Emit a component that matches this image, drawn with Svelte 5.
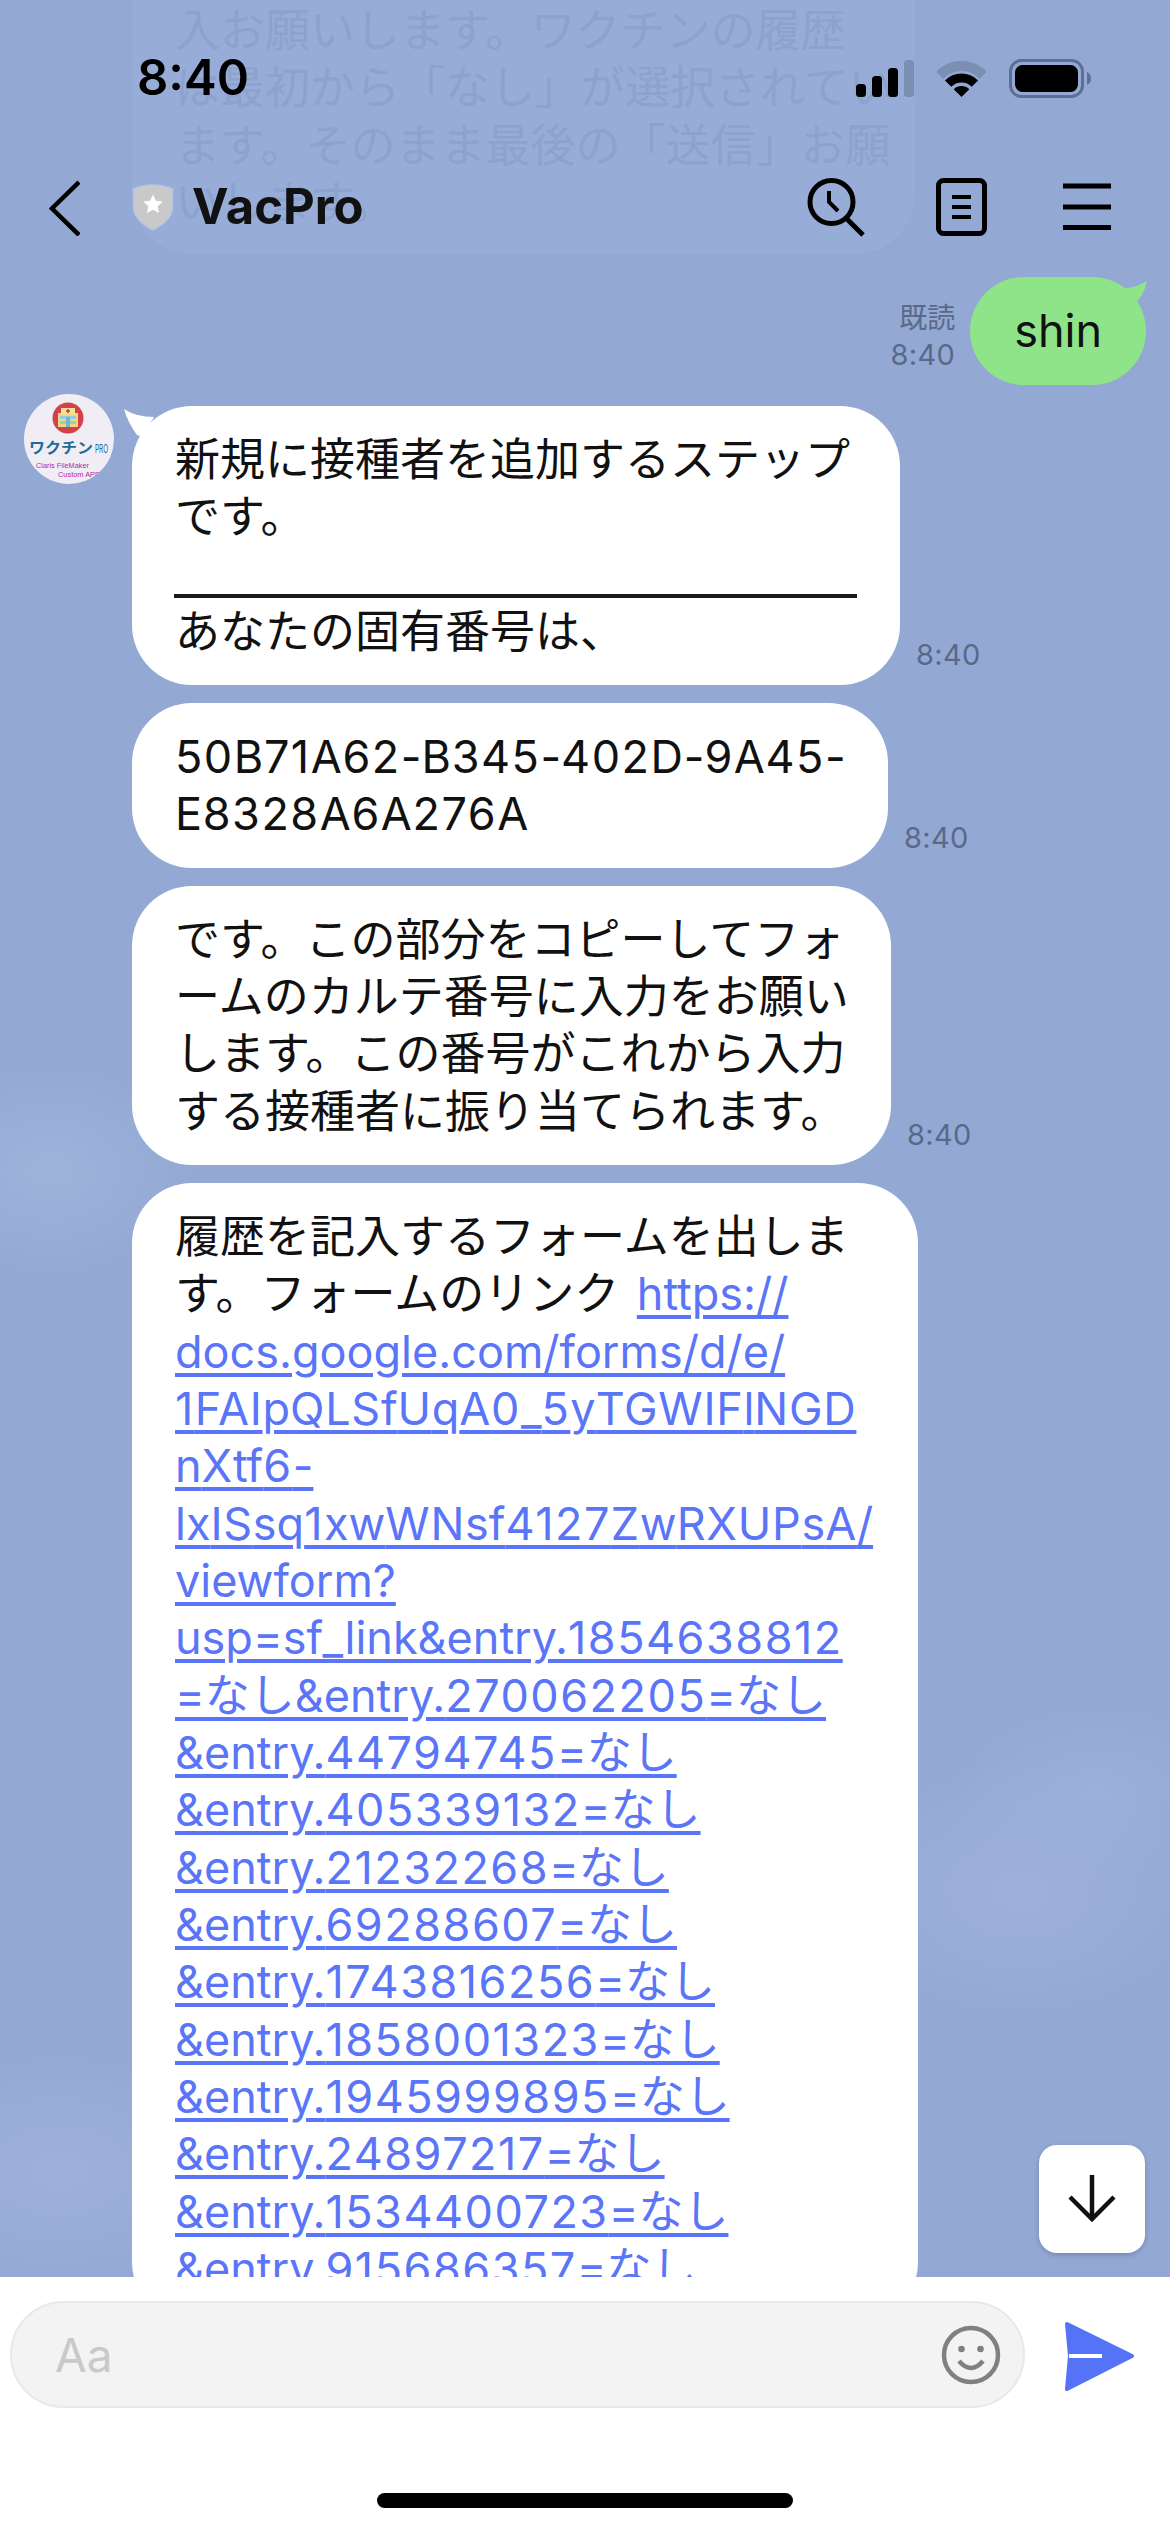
<script>
  const links = [
    'docs.google.com/forms/d/e/',
    '1FAIpQLSfUqA0_5yTGWIFlNGD',
    'nXtf6-',
    'lxISsq1xwWNsf4127ZwRXUPsA/',
    'viewform?',
    'usp=sf_link&entry.1854638812',
    '=なし&entry.270062205=なし',
    '&entry.44794745=なし',
    '&entry.405339132=なし',
    '&entry.21232268=なし',
    '&entry.69288607=なし',
    '&entry.1743816256=なし',
    '&entry.1858001323=なし',
    '&entry.1945999895=なし',
    '&entry.24897217=なし',
    '&entry.1534400723=なし',
    '&entry.915686357=なし'
  ];

  // The original face sets digits and capitals wider than Inter does.
  const parts = (line) =>
    line.split(/(\d+|[A-Z]+)/).filter(Boolean).map((text) => ({
      text,
      kind: /\d/.test(text) ? 'num' : /[A-Z]/.test(text) ? 'cap' : ''
    }));
</script>

{#snippet latin(line)}{#each parts(line) as p}<span class={p.kind}>{p.text}</span>{/each}{/snippet}

<div class="screen">
  <main class="chat">
    <div class="ghost">入お願いします。ワクチンの履歴<br />は最初から「なし」が選択されてい<br />ます。そのまま最後の「送信」お願<br />いします。</div>

    <div class="sent-row">
      <div class="meta">
        <span class="read">既読</span>
        <span class="time">8:40</span>
      </div>
      <div class="bubble sent">
        shin
        <svg class="tail-right" viewBox="0 0 40 40" aria-hidden="true"><path d="M0 12 Q18 13 33 4 Q30 20 17 30 Z" /></svg>
      </div>
    </div>

    <div class="group">
      <svg class="avatar" viewBox="0 0 90 90" aria-hidden="true">
        <rect width="90" height="90" fill="#f0edf4" />
        <circle cx="44" cy="24" r="15.5" fill="#d2414a" />
        <rect x="34" y="19" width="20" height="14" fill="#f6d77a" />
        <rect x="37" y="14" width="14" height="6" fill="#f8e29a" />
        <path d="M44 15v4M42 17h4" stroke="#c8323c" stroke-width="1.4" />
        <rect x="36" y="22" width="16" height="3" fill="#8fd0dc" />
        <rect x="36" y="27" width="16" height="3" fill="#8fd0dc" />
        <rect x="42" y="23" width="4" height="10" fill="#6fb9cf" />
        <text x="5" y="59" class="av-jp" textLength="64" lengthAdjust="spacingAndGlyphs">ワクチン</text>
        <text x="71" y="59" class="av-pro" textLength="13" lengthAdjust="spacingAndGlyphs">PRO</text>
        <text x="12" y="74" class="av-small" textLength="53" lengthAdjust="spacingAndGlyphs">Claris FileMaker</text>
        <text x="34" y="83" class="av-small" textLength="42" lengthAdjust="spacingAndGlyphs">Custom APP</text>
      </svg>

      <div class="stack">
        <div class="msg">
          <div class="bubble in w1">
            <svg class="tail-left" viewBox="0 0 30 30" aria-hidden="true"><path d="M0 0 Q12 8 30 8 L18 28 L13 26 Q4 14 0 0 Z" /></svg>
            新規に接種者を追加するステップ<br />です。
            <div class="rule"></div>
            あなたの固有番号は、
          </div>
          <span class="time">8:40</span>
        </div>

        <div class="msg">
          <div class="bubble in w2">{@render latin('50B71A62-B345-402D-9A45-')}<br />{@render latin('E8328A6A276A')}</div>
          <span class="time">8:40</span>
        </div>

        <div class="msg">
          <div class="bubble in w3">です。この部分をコピーしてフォ<br />ームのカルテ番号に入力をお願い<br />します。この番号がこれから入力<br />する接種者に振り当てられます。</div>
          <span class="time">8:40</span>
        </div>

        <div class="msg">
          <div class="bubble in w4">
            履歴を記入するフォームを出しま<br />す。フォームのリンク <span class="link first">https://</span><br />
            {#each links as line}
              <span class="link">{@render latin(line)}</span><br />
            {/each}
          </div>
        </div>
      </div>
    </div>

    <button class="down" aria-label="scroll to latest">
      <svg viewBox="0 0 60 60" aria-hidden="true">
        <path d="M30 6V50" />
        <path d="M8 28L30 50L52 28" />
      </svg>
    </button>
  </main>

  <header class="top">
    <div class="status">
      <span class="clock">8:40</span>
      <div class="status-icons">
        <svg class="sig" viewBox="856 58 58 39" aria-hidden="true">
          <rect x="856" y="83" width="10" height="13" rx="3.5" fill="#000" />
          <rect x="872" y="75" width="10" height="21" rx="3.5" fill="#000" />
          <rect x="888" y="67" width="10" height="29" rx="3.5" fill="#000" />
          <rect x="904" y="59" width="10" height="37" rx="3.5" fill="#7b8fb2" />
        </svg>
        <svg class="wifi" viewBox="937 58 49 39" aria-hidden="true">
          <path d="M939.6 74.1A31 31 0 0 1 983.4 74.1" fill="none" stroke="#7b8fb2" stroke-width="10" />
          <path d="M948.1 82.6A19 19 0 0 1 974.9 82.6" fill="none" stroke="#000" stroke-width="9" />
          <path d="M961.5 96L953.7 88.2A11 11 0 0 1 969.3 88.2Z" fill="#000" />
        </svg>
        <svg class="batt" viewBox="1009 58 82 39" aria-hidden="true">
          <rect x="1010.5" y="59.5" width="72" height="36" rx="11" fill="none" stroke="#5d7093" stroke-width="3" />
          <rect x="1015" y="64" width="63" height="27" rx="7.5" fill="#000" />
          <path d="M1087 71Q1091 73 1091 77.5Q1091 82 1087 84Z" fill="#5d7093" />
        </svg>
      </div>
    </div>
    <nav class="nav">
      <svg class="back" viewBox="49 178 31 58" aria-hidden="true"><path d="M79 182L52 208.500L79 235" /></svg>
      <svg class="shield" viewBox="132 183 42 48" aria-hidden="true">
        <path d="M133.500 189Q153 181 172.500 189V208Q172 220 153 230Q134 220 133.500 208Z" fill="#c9c9c9" stroke="#b4c6e4" stroke-width="1.500" />
        <path d="M153 194.500l2.900 6.300 6.900.8-5.100 4.700 1.400 6.800-6.100-3.400-6.100 3.400 1.400-6.800-5.100-4.700 6.900-.8z" fill="#fff" />
      </svg>
      <span class="title">VacPro</span>
      <svg class="search" viewBox="806 176 60 60" aria-hidden="true">
        <circle cx="831.500" cy="201" r="21.500" />
        <path d="M846 217L863 234" />
        <path class="hand" d="M829 190V201L838 210" />
      </svg>
      <svg class="doc" viewBox="936 179 51 58" aria-hidden="true">
        <rect x="938.500" y="181.500" width="46" height="53" rx="5" />
        <path class="hand" d="M952 198H971M952 208H971M952 218H971" />
      </svg>
      <svg class="menu" viewBox="1063 184 48 48" aria-hidden="true">
        <path d="M1063 187H1111M1063 208H1111M1063 228.500H1111" />
      </svg>
    </nav>
  </header>

  <footer class="composer">
    <div class="field">
      <span class="ph">Aa</span>
      <svg class="smile" viewBox="0 0 60 60" aria-hidden="true">
        <circle cx="30" cy="30" r="27" />
        <circle class="dot" cx="20.500" cy="24" r="3.300" />
        <circle class="dot" cx="39.500" cy="24" r="3.300" />
        <path d="M18 36Q30 50 42 36" />
      </svg>
    </div>
    <svg class="send" viewBox="1062 2319 75 75" aria-hidden="true">
      <path d="M1067 2324L1132 2356L1067 2389L1070 2356Z" fill="#5573f7" stroke="#5573f7" stroke-width="4" stroke-linejoin="round" />
      <rect x="1069" y="2354" width="33" height="4" fill="#fff" />
    </svg>
    <div class="home"></div>
  </footer>
</div>

<style>
  :global(body) {
    margin: 0;
    background: #fff;
  }

  .screen {
    position: relative;
    width: 1170px;
    height: 2532px;
    display: flex;
    flex-direction: column;
    overflow: hidden;
    font-family: Inter, "Noto Sans CJK JP", sans-serif;
    color: #111;
  }

  .chat {
    position: relative;
    flex: 1;
    min-height: 0;
    overflow: hidden;
    background-color: #93a9d4;
    background-image:
      radial-gradient(ellipse 190px 130px at 1020px 1890px, rgba(168, 184, 224, 0.5), transparent 100%),
      radial-gradient(ellipse 150px 90px at 1100px 1790px, rgba(168, 190, 224, 0.35), transparent 100%),
      radial-gradient(ellipse 150px 110px at 50px 1170px, rgba(168, 190, 224, 0.5), transparent 100%),
      radial-gradient(ellipse 190px 120px at 60px 2170px, rgba(168, 184, 224, 0.5), transparent 100%);
  }

  .ghost {
    width: 783px;
    height: 254px;
    margin-left: 132px;
    padding: 2px 0 0 43px;
    box-sizing: border-box;
    border-radius: 0 0 60px 60px;
    background: #97add8;
    color: #8ca3ce;
    font-size: 45px;
    line-height: 57.330px;
    white-space: nowrap;
    overflow: hidden;
  }

  .sent-row {
    display: flex;
    justify-content: flex-end;
    align-items: flex-end;
    gap: 15px;
    margin-top: 23px;
    padding-right: 24px;
  }

  .meta {
    display: flex;
    flex-direction: column;
    align-items: flex-end;
    padding-bottom: 12px;
    color: #5a6988;
  }

  .read {
    font-size: 28px;
    line-height: 37px;
  }

  .time {
    font-size: 29px;
    line-height: 36px;
    color: #5a6988;
    letter-spacing: 0.3px;
  }

  .bubble {
    position: relative;
    box-sizing: border-box;
    font-size: 45px;
    line-height: 57.330px;
    white-space: nowrap;
    border-radius: 60px;
  }

  .num {
    letter-spacing: 1.500px;
  }

  .cap {
    letter-spacing: 0.700px;
  }

  .sent {
    height: 108px;
    padding: 25px 44px;
    background: #8fe388;
    border-radius: 54px;
  }

  .tail-right {
    position: absolute;
    top: 0;
    right: -8px;
    width: 40px;
    height: 40px;
    fill: #8fe388;
  }

  .group {
    display: flex;
    align-items: flex-start;
    gap: 18px;
    margin-top: 21px;
    padding-left: 24px;
  }

  .avatar {
    flex: none;
    width: 90px;
    height: 90px;
    margin-top: -12px;
    border-radius: 50%;
  }

  .av-jp {
    font-size: 15px;
    font-weight: 700;
    fill: #1f6a9a;
  }

  .av-pro {
    font-size: 12px;
    fill: #1f6a9a;
  }

  .av-small {
    font-family: "Liberation Sans", sans-serif;
    font-size: 7px;
    fill: #b825a8;
  }

  .stack {
    display: flex;
    flex-direction: column;
    gap: 18px;
  }

  .msg {
    display: flex;
    align-items: flex-end;
    gap: 16px;
  }

  .msg .time {
    padding-bottom: 12px;
  }

  .in {
    padding: 25px 0 25px 43px;
    background: #fff;
  }

  .w1 { width: 768px; }
  .w2 { width: 756px; }
  .w3 { width: 759px; }
  .w4 { width: 786px; }

  .tail-left {
    position: absolute;
    top: 3px;
    left: -8px;
    width: 30px;
    height: 30px;
    fill: #fff;
  }

  .rule {
    box-sizing: border-box;
    width: 683px;
    height: 52px;
    margin: 0 0 5px -1px;
    border-bottom: 4px solid #1a1a1a;
  }

  .link {
    color: #5a75f7;
    text-decoration: underline;
    text-decoration-thickness: 3.500px;
    text-underline-offset: 5px;
  }

  .first {
    margin-left: 5px;
  }

  .down {
    position: absolute;
    right: 25px;
    bottom: 24px;
    width: 106px;
    height: 108px;
    padding: 0;
    border: 0;
    border-radius: 18px;
    background: #fff;
    box-shadow: 0 2px 5px rgba(40, 60, 100, 0.3);
    display: flex;
    align-items: center;
    justify-content: center;
  }

  .down svg {
    width: 60px;
    height: 60px;
    fill: none;
    stroke: #111;
    stroke-width: 4.500px;
  }

  .top {
    position: absolute;
    top: 0;
    left: 0;
    right: 0;
  }

  .status {
    display: flex;
    justify-content: space-between;
    align-items: center;
    height: 44px;
    padding: 56px 79px 0 137px;
  }

  .clock {
    font-size: 49px;
    line-height: 44px;
    font-weight: 600;
    color: #000;
  }

  .status-icons {
    display: flex;
    align-items: center;
    gap: 23px;
  }

  .sig { width: 58px; height: 39px; }
  .wifi { width: 49px; height: 39px; }
  .batt { width: 82px; height: 39px; }

  .nav {
    display: flex;
    align-items: center;
    height: 58px;
    margin-top: 78px;
    padding: 0 59px 0 49px;
  }

  .back {
    width: 31px;
    height: 58px;
    fill: none;
    stroke: #000;
    stroke-width: 4.500px;
  }

  .shield {
    width: 42px;
    height: 48px;
    margin-left: 52px;
  }

  .title {
    flex: 1;
    margin-left: 18px;
    font-size: 49px;
    line-height: 58px;
    font-weight: 700;
    color: #111;
  }

  .search {
    width: 60px;
    height: 60px;
    fill: none;
    stroke: #000;
    stroke-width: 5px;
  }

  .doc {
    width: 51px;
    height: 58px;
    margin-left: 70px;
    fill: none;
    stroke: #000;
    stroke-width: 5px;
  }

  .hand {
    stroke-width: 4px;
  }

  .menu {
    width: 48px;
    height: 48px;
    margin-left: 76px;
    fill: none;
    stroke: #000;
    stroke-width: 5px;
  }

  .composer {
    position: relative;
    flex: none;
    height: 255px;
    box-sizing: border-box;
    padding: 24px 0 0 10px;
    background: #fff;
    display: flex;
    align-items: flex-start;
  }

  .field {
    box-sizing: border-box;
    width: 1015px;
    height: 107px;
    padding: 0 22px 0 43px;
    border: 2px solid #e8e8e8;
    border-radius: 54px;
    background: #f3f3f3;
    display: flex;
    align-items: center;
    justify-content: space-between;
  }

  .ph {
    font-size: 46px;
    color: #c9c9c9;
  }

  .smile {
    width: 60px;
    height: 60px;
    fill: none;
    stroke: #808080;
    stroke-width: 4.500px;
  }

  .dot {
    fill: #808080;
    stroke: none;
  }

  .send {
    flex: none;
    width: 75px;
    height: 75px;
    margin: 18px 0 0 37px;
  }

  .home {
    position: absolute;
    left: 377px;
    bottom: 24px;
    width: 416px;
    height: 15px;
    border-radius: 8px;
    background: #000;
  }
</style>
